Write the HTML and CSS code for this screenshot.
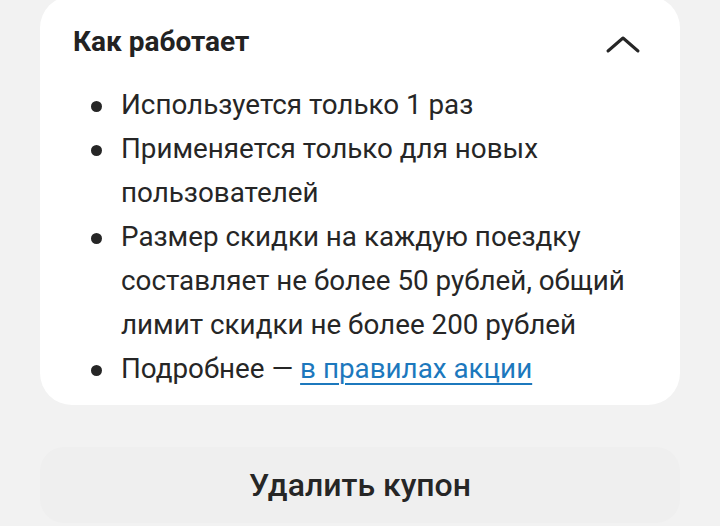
FILE: index.html
```html
<!DOCTYPE html>
<html lang="ru">
<head>
    <meta charset="UTF-8">
    <meta name="viewport" content="width=device-width, initial-scale=1.0">
    <title>Как работает</title>
    <link rel="stylesheet" href="styles.css">
</head>
<body>
    <div class="page">
        <section class="card">
            <div class="card-header">
                <h2>Как работает</h2>
                <svg class="chevron" width="36" height="20" viewBox="0 0 36 20">
                    <path d="M3 16 L18 3 L33 16" fill="none" stroke="#262626" stroke-width="3" stroke-linecap="round" stroke-linejoin="round"></path>
                </svg>
            </div>
            <ul class="rules">
                <li>Используется только 1 раз</li>
                <li>Применяется только для новых пользователей</li>
                <li>Размер скидки на каждую поездку составляет не более 50 рублей, общий лимит скидки не более 200 рублей</li>
                <li>Подробнее — <a href="#">в правилах акции</a></li>
            </ul>
        </section>
        <button class="remove">Удалить купон</button>
    </div>
</body>
</html>
```

FILE: styles.css
```css
body {
    margin: 0;
    background-color: #f2f2f2;
    font-family: Roboto, 'Noto Sans', sans-serif;
    color: #262626;
    overflow: hidden;
}
.page {
    padding: 0 40px;
    display: flex;
    flex-direction: column;
    gap: 42px;
}
.card {
    margin-top: -4px;
    background-color: #fff;
    border-radius: 32px;
    padding: 29px 40px 14px 33px;
}
.card-header {
    display: flex;
    justify-content: space-between;
    align-items: center;
    height: 34px;
}
h2 {
    margin: 0;
    font-size: 28px;
    font-weight: 700;
    line-height: 34px;
    color: #222;
}
.chevron {
    margin-right: -1px;
    margin-top: 6px;
}
.rules {
    list-style: none;
    margin: 24px 0 0;
    padding: 0 0 0 48px;
    font-size: 27.8px;
    line-height: 44px;
}
.rules li {
    position: relative;
}
.rules li::before {
    content: "";
    position: absolute;
    left: -30px;
    top: 18px;
    width: 11px;
    height: 11px;
    border-radius: 50%;
    background-color: #262626;
}
.rules a {
    color: #1c78bd;
    text-decoration: underline;
    text-underline-offset: 5px;
    text-decoration-thickness: 2px;
}
.remove {
    height: 76px;
    border: none;
    border-radius: 24px;
    background-color: #efefef;
    font-family: Roboto, 'Noto Sans', sans-serif;
    font-size: 32px;
    font-weight: 500;
    color: #262626;
}
```
